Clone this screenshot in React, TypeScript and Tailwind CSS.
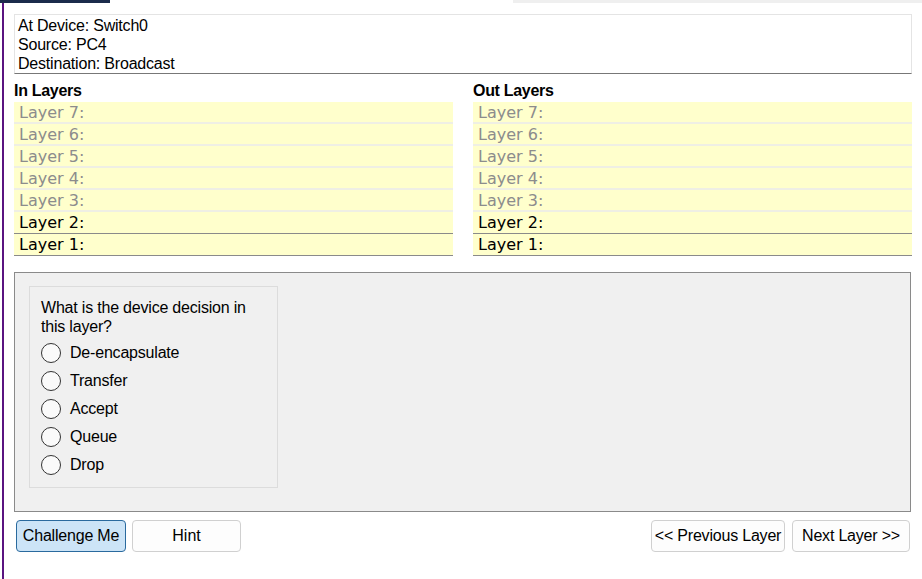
import React from 'react';

const layers = [7, 6, 5, 4, 3, 2, 1];
const options = ['De-encapsulate', 'Transfer', 'Accept', 'Queue', 'Drop'];

function LayerColumn({ title }: { title: string }) {
  return (
    <div className="flex-1 flex flex-col">
      <div className="h-[19px] leading-[19px] text-[16px] font-bold text-black tracking-[-0.3px]">{title}</div>
      <div className="flex flex-col mt-[2px]">
        {layers.map((n) => {
          const active = n <= 2;
          return (
            <div
              key={n}
              className={
                active
                  ? 'h-[22px] bg-[#ffffcc] border-b border-[#8a8a8a] px-[5px] text-[16px] leading-[22px] text-black [font-family:"DejaVu_Sans",Verdana,sans-serif]'
                  : 'h-[22px] bg-[#ffffcc] border-b-2 border-[#efefe4] px-[5px] text-[16px] leading-[22px] text-[#8c8c8c] [font-family:"DejaVu_Sans",Verdana,sans-serif]'
              }
            >
              Layer {n}:
            </div>
          );
        })}
      </div>
    </div>
  );
}

export default function App() {
  return (
    <div className="w-[922px] h-[579px] bg-white flex flex-col overflow-hidden [font-family:'Liberation_Sans',Arial,sans-serif] text-[16px] text-black">
      {/* top tab strip */}
      <div className="flex h-[3px] shrink-0">
        <div className="w-[110px] bg-[#1b2b4b]" />
        <div className="w-[403px]" />
        <div className="flex-1 bg-[#efefef]" />
      </div>

      <div className="flex-1 ml-[2px] border-l-2 border-[#5a1480] pl-[10px] pr-[10px] pt-[11px] flex flex-col">
        {/* info box */}
        <div className="h-[60px] border border-[#e4e4e4] border-b-[#777] px-[3px] pt-[1px] leading-[19px] tracking-[-0.2px]">
          <div>At Device: Switch0</div>
          <div>Source: PC4</div>
          <div>Destination: Broadcast</div>
        </div>

        {/* layers */}
        <div className="flex gap-[20px] mt-[7px]">
          <LayerColumn title="In Layers" />
          <LayerColumn title="Out Layers" />
        </div>

        {/* question panel */}
        <div className="mt-[16px] mr-[1px] h-[240px] bg-[#f0f0f0] border border-[#8a8a8a] pl-[14px] pt-[13px]">
          <div className="w-[249px] h-[202px] border border-[#dcdcdc] pl-[11px] pt-[11px]">
            <div className="leading-[19px] w-[220px] tracking-[-0.2px]">What is the device decision in this layer?</div>
            <div className="flex flex-col mt-[3px]">
              {options.map((o) => (
                <label key={o} className="h-[28px] flex items-center gap-[9px]">
                  <span className="w-[20px] h-[20px] rounded-full border border-[#333] bg-[#fafafa]" />
                  <span className="tracking-[-0.2px]">{o}</span>
                </label>
              ))}
            </div>
          </div>
        </div>

        {/* buttons */}
        <div className="flex mt-[8px] pl-[2px] pr-[2px]">
          <button className="w-[110px] h-[32px] bg-[#cce4f7] border border-[#2a6a9e] rounded-[4px] tracking-[-0.2px]">
            Challenge Me
          </button>
          <button className="w-[109px] h-[32px] ml-[6px] bg-[#fdfdfd] border border-[#d0d0d0] rounded-[4px]">
            Hint
          </button>
          <div className="flex-1" />
          <button className="w-[134px] h-[32px] bg-[#fdfdfd] border border-[#d0d0d0] rounded-[4px] tracking-[-0.2px]">
            &lt;&lt; Previous Layer
          </button>
          <button className="w-[118px] h-[32px] ml-[7px] bg-[#fdfdfd] border border-[#d0d0d0] rounded-[4px] tracking-[-0.2px]">
            Next Layer &gt;&gt;
          </button>
        </div>
      </div>
    </div>
  );
}
